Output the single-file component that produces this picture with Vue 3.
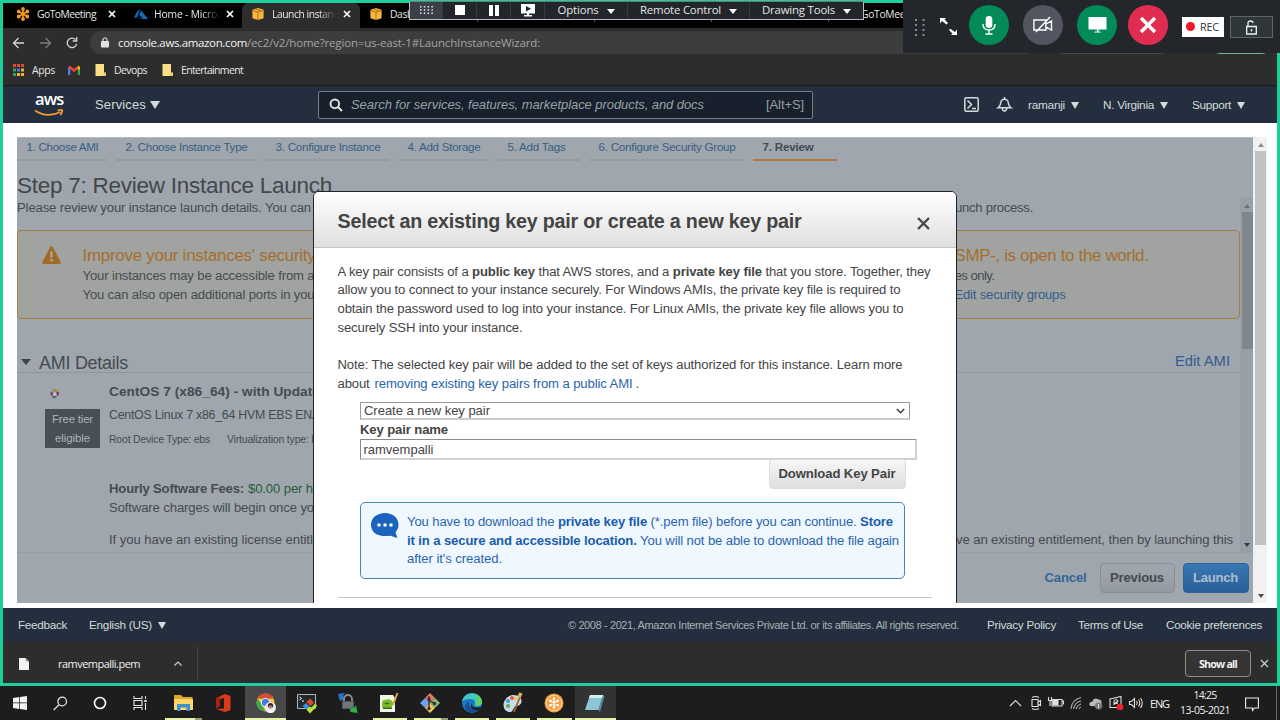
<script setup>
// Tracks a label so that it fills the given width in pixels.
const vFit = {
  mounted(el, { value }) {
    const range = document.createRange()
    range.selectNodeContents(el)
    const natural = range.getBoundingClientRect().width
    const count = el.textContent.length
    el.style.letterSpacing = `${(value - natural) / count}px`
    el.style.width = `${value}px`
  },
}

const steps = [
  { label: '1. Choose AMI', w: 72, tab: 90 },
  { label: '2. Choose Instance Type', w: 122, tab: 141 },
  { label: '3. Configure Instance', w: 105, tab: 123 },
  { label: '4. Add Storage', w: 73, tab: 91 },
  { label: '5. Add Tags', w: 58, tab: 82 },
  { label: '6. Configure Security Group', w: 137, tab: 155 },
  { label: '7. Review', w: 51, tab: 84, active: true },
]
</script>

<template>
  <div class="screen">
    <div class="frame">
      <div class="tabs">
        <div class="tab t1">
          <svg class="fav" width="14" height="14" viewBox="-7 -7 14 14"><g stroke="#f39a22" stroke-width="1.6" fill="#f39a22"><path d="M0-5V5M-4.3-2.5L4.3 2.5M-4.3 2.5L4.3-2.5" /><circle cy="-5" r="1.1" /><circle cy="5" r="1.1" /><circle cx="-4.3" cy="-2.5" r="1.1" /><circle cx="4.3" cy="2.5" r="1.1" /><circle cx="-4.3" cy="2.5" r="1.1" /><circle cx="4.3" cy="-2.5" r="1.1" /></g></svg>
          <span v-fit="59" class="tab-name">GoToMeeting</span>
          <svg class="x" width="8" height="8" viewBox="0 0 8 8"><path d="M1 1L7 7M7 1L1 7" /></svg>
        </div>
        <div class="tab t2">
          <svg class="fav" width="14" height="14" viewBox="0 0 14 14"><path fill="#0f6fbd" d="M6.3 1.8L3 4.7 0 10.8h2.8zM7 3.2l-1.7 4.6 3.3 3.4-5.2.9H14z" /></svg>
          <span v-fit="68" class="tab-name fade">Home - Micros</span>
          <svg class="x" width="8" height="8" viewBox="0 0 8 8"><path d="M1 1L7 7M7 1L1 7" /></svg>
        </div>
        <div class="tab t3">
          <svg class="fav" width="14" height="14" viewBox="0 0 14 14"><path fill="#f7b73c" d="M7 1l5.6 1.8v8.4L7 13 1.400 11.200V2.800z" /><path fill="none" stroke="#9a5e12" stroke-width=".8" d="M1.500 3.500L7 5l5.500-1.500M7 5v8M4.500 2L10 3.800" /></svg>
          <span v-fit="66" class="tab-name fade">Launch instanc</span>
          <svg class="x" width="8" height="8" viewBox="0 0 8 8"><path d="M1 1L7 7M7 1L1 7" /></svg>
        </div>
        <div class="tab t4">
          <svg class="fav" width="14" height="14" viewBox="0 0 14 14"><path fill="#f7b73c" d="M7 1l5.600 1.800v8.400L7 13 1.400 11.200V2.800z" /><path fill="none" stroke="#9a5e12" stroke-width=".8" d="M1.500 3.500L7 5l5.500-1.500M7 5v8M4.500 2L10 3.800" /></svg>
          <span v-fit="23" class="tab-name">Dash</span>
        </div>
        <i class="tick k1"></i><i class="tick"></i><i class="tick"></i><i class="tick"></i>
        <span v-fit="50" class="tab-name last">GoToMeeti</span>
      </div>

      <div class="toolbar">
        <svg width="84" height="20" viewBox="0 0 84 20" fill="none" stroke="#d6d6d6" stroke-width="1.300"><path d="M21 11H11M15.500 6L10.500 11l5 5" /><path stroke="#7d7d7d" d="M37 11h10M42.500 6l5 5-5 5" /><path d="M72.500 7.500A4.800 4.800 0 1 0 73.700 12M73.700 5v4h-4" /></svg>
        <div class="omni">
          <svg width="8" height="11" viewBox="0 0 8 11"><rect y="4" width="8" height="6.500" rx=".8" fill="#e2e2e2" /><path d="M2 4.500V3a2 2 0 0 1 4 0v1.500" fill="none" stroke="#e2e2e2" stroke-width="1.100" /></svg>
          <span v-fit="129" class="host">console.aws.amazon.com</span><span v-fit="293" class="path">/ec2/v2/home?region=us-east-1#LaunchInstanceWizard:</span>
        </div>
        <i class="chip"></i>
        <i class="update"></i>
      </div>

      <div class="bookmarks">
        <svg class="apps" width="11" height="12" viewBox="0 0 11 12"><g fill="#e0463b"><path d="M0 0h3v3H0zM4 0h3v3H4zM8 0h3v3H8z" /></g><path fill="#37a156" d="M0 4.500h3v3H0zM0 9h3v3H0z" /><path fill="#3d7be0" d="M4 4.500h3v3H4z" /><path fill="#f0b42c" d="M8 4.500h3v3H8zM8 9h3v3H8zM4 9h3v3H4z" /></svg>
        <span v-fit="23">Apps</span>
        <svg class="gmail" width="12" height="10" viewBox="0 0 12 10" fill="none" stroke-width="2.200"><path stroke="#4285f4" d="M1.100 10V2" /><path stroke="#34a853" d="M10.900 10V4" /><path stroke="#ea4335" d="M1 1.500l5 4 5-4" stroke-width="2.600" /><path stroke="#fbbc04" d="M10.900 4.500V1.500" /></svg>
        <svg class="folder f1" width="11" height="12" viewBox="0 0 11 12"><path fill="#fbdf86" d="M.500 0H9v8.500h2V12H.500z" /><path fill="#e8bf56" d="M9 8.500L11 12H8z" /></svg>
        <span v-fit="33">Devops</span>
        <svg class="folder f2" width="11" height="12" viewBox="0 0 11 12"><path fill="#fbdf86" d="M.500 0H9v8.500h2V12H.500z" /><path fill="#e8bf56" d="M9 8.500L11 12H8z" /></svg>
        <span v-fit="62">Entertainment</span>
      </div>

      <div class="nav">
        <div class="logo">
          <b>aws</b>
          <svg width="30" height="8" viewBox="0 0 32 8" preserveAspectRatio="none" fill="none" stroke="#f29a2e" stroke-width="1.800"><path d="M1 1.500Q14 9.500 28 3M25 1.500Q31 0 30 2.200 29.500 4.500 28 6" /></svg>
        </div>
        <span v-fit="51" class="services">Services</span><i class="tri s"></i>
        <div class="search">
          <svg width="14" height="14" viewBox="0 0 14 14" fill="none" stroke="#dfe3e3" stroke-width="1.900"><circle cx="5.800" cy="5.800" r="4.300" /><path d="M9 9l4 4" /></svg>
          <em v-fit="353">Search for services, features, marketplace products, and docs</em>
          <span v-fit="38" class="alt">[Alt+S]</span>
        </div>
        <svg class="shell" width="15" height="15" viewBox="0 0 15 15" fill="none" stroke="#d5dbdb" stroke-width="1.500"><rect x=".8" y=".8" width="13.400" height="13.400" rx="1.500" /><path d="M3.500 3.500L7.500 7.500l-4 4M8 11.500h4" /></svg>
        <svg class="bell" width="15" height="15" viewBox="0 0 15 15" fill="none" stroke="#d5dbdb" stroke-width="1.500"><path d="M7.500 0v2M1 10.800h13Q11.500 9 11.300 6A3.800 3.800 0 0 0 3.700 6Q3.500 9 1 10.800zM5.200 11Q5.500 14 7.500 14T9.800 11" /></svg>
        <span v-fit="37" class="n1">ramanji</span><i class="tri u"></i>
        <span v-fit="51" class="n2">N. Virginia</span><i class="tri u"></i>
        <span v-fit="39" class="n2">Support</span><i class="tri u"></i>
      </div>

      <div class="page">
        <div class="console">
          <div class="steps">
            <div v-for="s in steps" :key="s.label" class="step" :class="{ current: s.active }" :style="{ width: s.tab + 'px' }">
              <span v-fit="s.w">{{ s.label }}</span>
            </div>
          </div>
          <div class="title"><span v-fit="315">Step 7: Review Instance Launch</span></div>

          <div class="review">
            <div class="details">
              <div class="row sub"><span v-fit="294">Please review your instance launch details. You can</span><span v-fit="78" class="r-sub">unch process.</span></div>
              <div class="warn">
                <svg width="19" height="18" viewBox="0 0 19 18"><path fill="#9f6a26" d="M8.300 1Q9.500-.7 10.700 1L18.700 16Q19 17.800 17.500 18H1.500Q0 17.800.300 16z" /><path stroke="#a9a99f" stroke-width="2.400" d="M9.500 5.500v6M9.500 13v2.400" /></svg>
                <div class="warn-text">
                  <div class="row wt"><span v-fit="233">Improve your instances' security</span><span v-fit="194" class="r-w1">SMP-, is open to the world.</span></div>
                  <div class="row"><span v-fit="232">Your instances may be accessible from a</span><span v-fit="40" class="r-w2">es only.</span></div>
                  <div class="row"><span v-fit="232">You can also open additional ports in you</span><span v-fit="111" class="r-w3 link">Edit security groups</span></div>
                </div>
              </div>
              <div class="ami-head"><i></i><span v-fit="89">AMI Details</span><span v-fit="55" class="edit link">Edit AMI</span></div>
              <div class="ami">
                <div class="ami-side">
                  <svg width="10" height="10" viewBox="0 0 10 10"><path fill="#a98a3c" d="M2 0h4l3 3H5z" /><path fill="#70406d" d="M5.500 3H9v3L7 7z" /><path fill="#53608c" d="M3 7h4L5 9.500 2 9z" /><path fill="#765077" d="M0 4l3-2v5H1z" /><path fill="#c1c3b8" d="M3.500 3.500h3v3h-3z" /></svg>
                  <div class="free"><span v-fit="41">Free tier</span><span v-fit="35">eligible</span></div>
                </div>
                <div class="ami-info">
                  <div class="row a1"><b v-fit="211">CentOS 7 (x86_64) - with Update</b></div>
                  <div class="row a2"><span v-fit="211">CentOS Linux 7 x86_64 HVM EBS ENA</span></div>
                  <div class="row a3"><span v-fit="101">Root Device Type: ebs</span><span v-fit="90" class="virt">Virtualization type: h</span></div>
                  <div class="row a4"><b v-fit="135">Hourly Software Fees:</b><span v-fit="65" class="fee">$0.00 per h</span></div>
                  <div class="row"><span v-fit="205">Software charges will begin once yo</span></div>
                  <div class="row a6"><span v-fit="211">If you have an existing license entitle</span><span v-fit="277" class="r-a6">ve an existing entitlement, then by launching this</span></div>
                </div>
              </div>
            </div>
            <div class="bar inner"><i class="up"></i><i class="thumb"></i><i class="down"></i></div>
          </div>

          <div class="actions">
            <b v-fit="42" class="cancel">Cancel</b>
            <div class="btn prev"><b v-fit="54">Previous</b></div>
            <div class="btn launch"><b v-fit="45">Launch</b></div>
          </div>

          <div class="modal">
            <div class="modal-head">
              <b v-fit="464">Select an existing key pair or create a new key pair</b>
              <svg width="13" height="13" viewBox="0 0 13 13"><path d="M1 1L12 12M12 1L1 12" stroke="#484848" stroke-width="2.400" /></svg>
            </div>
            <div class="modal-body">
              <p><span v-fit="593">A key pair consists of a <b>public key</b> that AWS stores, and a <b>private key file</b> that you store. Together, they</span></p>
              <p><span v-fit="563">allow you to connect to your instance securely. For Windows AMIs, the private key file is required to</span></p>
              <p><span v-fit="566">obtain the password used to log into your instance. For Linux AMIs, the private key file allows you to</span></p>
              <p><span v-fit="185">securely SSH into your instance.</span></p>
              <p></p>
              <p><span v-fit="565">Note: The selected key pair will be added to the set of keys authorized for this instance. Learn more</span></p>
              <p><span v-fit="32">about</span><span v-fit="258" class="rm">removing existing key pairs from a public AMI</span><span class="dot">.</span></p>
              <div class="select"><span v-fit="126">Create a new key pair</span><svg width="9" height="6" viewBox="0 0 9 6"><path d="M.800 1L4.500 4.700 8.200 1" fill="none" stroke="#444" stroke-width="1.600" /></svg></div>
              <div class="label"><b v-fit="88">Key pair name</b></div>
              <div class="input"><span v-fit="70">ramvempalli</span></div>
              <div class="download"><b v-fit="117">Download Key Pair</b></div>
              <div class="info">
                <svg width="28" height="26" viewBox="0 0 28 26"><path fill="#1b63bd" d="M14 0C22 0 27.500 5 27.500 11.500c0 3.500-1 5.500-3 7.500l1.800 6-7-2.300C8 24.500 0 20.500 0 11.500 0 5 6 0 14 0z" /><g fill="#fff"><circle cx="8" cy="12" r="1.800" /><circle cx="14" cy="12" r="1.800" /><circle cx="20" cy="12" r="1.800" /></g></svg>
                <div>
                  <p><span v-fit="486">You have to download the <b>private key file</b> (*.pem file) before you can continue. <b>Store</b></span></p>
                  <p><span v-fit="492"><b>it in a secure and accessible location.</b> You will not be able to download the file again</span></p>
                  <p><span v-fit="95">after it's created.</span></p>
                </div>
              </div>
              <hr />
            </div>
          </div>
        </div>
        <div class="bar outer"><i class="up"></i><i class="thumb"></i><i class="down"></i></div>
      </div>

      <div class="footer">
        <span v-fit="49">Feedback</span>
        <span v-fit="63" class="lang">English (US)</span><i class="tri u"></i>
        <span v-fit="391" class="copy">© 2008 - 2021, Amazon Internet Services Private Ltd. or its affiliates. All rights reserved.</span>
        <span v-fit="69" class="l1">Privacy Policy</span>
        <span v-fit="65" class="l2">Terms of Use</span>
        <span v-fit="96" class="l3">Cookie preferences</span>
      </div>

      <div class="downloads">
        <svg class="file" width="10" height="12" viewBox="0 0 10 12"><path fill="#f3f3f3" d="M0 0h6.500L10 3.500V12H0z" /><path fill="#aaa" d="M6.500 0v3.500H10z" /></svg>
        <span v-fit="82">ramvempalli.pem</span>
        <svg class="chev" width="8" height="5" viewBox="0 0 8 5"><path d="M.500 4.500L4 1l3.500 3.500" fill="none" stroke="#d0d0d0" stroke-width="1.200" /></svg>
        <i class="sep"></i>
        <div class="show"><b v-fit="38">Show all</b></div>
        <svg class="close" width="9" height="9" viewBox="0 0 9 9"><path d="M1 1L8 8M8 1L1 8" stroke="#cfcfcf" stroke-width="1.200" /></svg>
      </div>
    </div>

    <div class="taskbar">
      <div class="app a40"><svg width="14" height="14" viewBox="0 0 14 14" fill="#f2f2f2"><path d="M0 2l6.300-1v5.600H0zM7 .900L14 0v6.600H7zM0 7.300h6.300V13L0 12zM7 7.300h7V14L7 13z" /></svg></div>
      <div class="app a40"><svg width="15" height="15" viewBox="0 0 15 15" fill="none" stroke="#e8e8e8" stroke-width="1.200"><circle cx="9.200" cy="5.500" r="4.300" /><path d="M6 8.800L.700 14" /></svg></div>
      <div class="app a40"><svg width="14" height="14" viewBox="0 0 14 14"><circle cx="7" cy="7" r="5.500" fill="none" stroke="#f5f5f5" stroke-width="1.700" /></svg></div>
      <div class="app a40"><svg width="14" height="14" viewBox="0 0 14 14" fill="none" stroke="#e5e5e5" stroke-width="1.100"><path d="M1 0v2.500h8V0M1 14v-2.500h8V14M1 4.500h8v5H1zM12.500 0v3M12.500 7v7" /><path stroke-width="2.400" d="M12.500 4v2" /></svg></div>
      <div class="app a44 run more"><svg width="19" height="16" viewBox="0 0 19 16"><path fill="#e2a52d" d="M0 0h7l2 2h9.500v13H0z" /><path fill="#ffd566" d="M0 4h19v11H0z" /><path fill="#3a91d0" d="M3 9h13v7h-3.500v-3.500h-6V16H3z" /></svg></div>
      <div class="app a40 gap"><svg width="16" height="18" viewBox="0 0 16 18"><path fill="#dc3b1a" d="M10 0l5.500 2v14L10 18 1 15l8-.500V4L4.500 5.500v7L1 14V4z" /><path fill="#a92118" d="M1 4l4-1.500v9.700L1 14z" /></svg></div>
      <div class="app a41 run on"><svg width="20" height="20" viewBox="0 0 20 20"><circle cx="9.500" cy="9.500" r="9" fill="#f5c931" /><path fill="#dc4938" d="M1.500 5.500A9 9 0 0 1 17.500 5.500L9 6z" /><path fill="#39a853" d="M1.500 5.500L6 12l3.500 6.500A9 9 0 0 1 1.500 5.500z" /><circle cx="9.500" cy="9.500" r="4.600" fill="#fff" /><circle cx="9.500" cy="9.500" r="3.700" fill="#3f7ee8" /><circle cx="14.500" cy="14.500" r="5.500" fill="#eee6ed" /><circle cx="14.500" cy="12.500" r="2.600" fill="#382523" /><circle cx="14.500" cy="14" r="1.800" fill="#bd8066" /><path fill="#f4f4ff" d="M11 19q3.500-5 7 0l-3.500 1z" /></svg></div>
      <div class="app a41"><svg width="20" height="19" viewBox="0 0 20 19"><path fill="#24292d" stroke="#aeb6b8" d="M.500.500h18v14H.500z" /><path fill="none" stroke="#fff" d="M2.500 3l2 1.500-2 1.500M5 7h2" /><path fill="#e5472e" d="M13 4.500l4 4-3.500 3.500-4-4z" /><path fill="#3a8ee6" d="M9 9l4 4-3 3-4.500-4z" /><path fill="#b9e235" d="M13 19.500l-3.500-4 3.500-3 1.500 1 4-4.500 1.500 3z" /></svg></div>
      <div class="app a41"><svg width="20" height="20" viewBox="0 0 20 20"><path fill="#2872d1" d="M0 1l7-1-2 3 2 3-5 2z" /><path d="M6 9V6a4 4 0 0 1 8 0v3" fill="none" stroke="#8a8e90" stroke-width="1.800" /><rect x="4" y="8" width="12" height="8" fill="#53585a" /><path stroke="#8d9193" d="M5 10h10M5 12h10M5 14h10" /><path fill="#2ab840" d="M12 16l4-1 2-3 1.500 8-7-1z" /></svg></div>
      <div class="app a41 run"><svg width="19" height="20" viewBox="0 0 19 20"><path fill="#f0f5e8" d="M0 2h13l2 3v14H0z" /><path fill="#7cba2d" d="M2 10q1-4 4-3 2-2 4 0 3 0 3 4-1 5-5 5-5 0-6-2z" /><path fill="#37701b" d="M4 10.500q3-2 6 0l-3 1zM3 14.500h9V16H3z" /><path stroke="#d7a847" stroke-width="2" d="M17.500 0L13 12" /></svg></div>
      <div class="app a41 run more"><svg width="20" height="20" viewBox="0 0 20 20"><path fill="#e67769" d="M10 0l5 5-5 5-5-5z" /><path fill="#6ea1ea" d="M5 5l5 5-5 5-5-5z" /><path fill="#82be6b" d="M15 5l5 5-5 5-5-5z" /><path fill="#f2c663" d="M10 10l5 5-5 5-5-5z" /><path d="M9 3v14M9 7l6 4" stroke="#372b27" stroke-width="1.300" fill="none" /><circle cx="9" cy="6" r="1.700" fill="#372b27" /><circle cx="14.500" cy="10.500" r="1.700" fill="#372b27" /><circle cx="9" cy="15.500" r="1.700" fill="#372b27" /></svg></div>
      <div class="app a41 run"><svg width="20" height="20" viewBox="0 0 20 20"><circle cx="10" cy="10" r="10" fill="#1679c9" /><path fill="#44c7be" d="M0 9C1 1 9-1.500 15 1.500 19 4 21 8 19.500 11c-2 3-6 2.500-7 1 2-3-.500-6-4-6S1 7 0 9z" /><path fill="#64cf62" d="M14 1c5 2 7 7 5.500 10-2 2-5 2-7 1 3-3 4-7 1.500-11z" /><path fill="#174f91" d="M7 9c-1 5 3 8 10 7-4 6-13 4-14-2 0-3 2-5 4-5z" /><path fill="#1d1d1d" d="M10 10c-1 4 3 5.500 9 4l-1.500 3C11 18 7 14 10 10z" /></svg></div>
      <div class="app a41 run"><svg width="20" height="20" viewBox="0 0 20 20"><path fill="#c7dceb" d="M1 9C4 2 11 0 17 4c4 6-1 9-4 9-2 0-2 4-5 6-4 1-9-3-7-10z" /><circle cx="5" cy="8" r="2" fill="#4d98ce" /><circle cx="9" cy="5" r="2" fill="#e45a3a" /><circle cx="5" cy="13" r="2" fill="#65a943" /><circle cx="13" cy="6" r="1.700" fill="#f2c840" /><path stroke="#a2642e" stroke-width="1.800" d="M17 4L11 19" /><path stroke="#e3ac62" stroke-width="3.500" d="M18 0l-2 4" /></svg></div>
      <div class="app a41 run"><svg width="20" height="20" viewBox="-10 -10 20 20"><circle r="9.500" fill="#f49d3f" /><circle r="7.600" fill="none" stroke="#fff6df" stroke-width=".6" /><g stroke="#fff" stroke-width="1.300" stroke-linecap="round" fill="#fff"><path d="M0-4.500V4.500M-3.900-2.300l7.800 4.600M-3.900 2.300l7.800-4.600" /><circle cy="-4.300" r=".7" /><circle cy="4.300" r=".7" /><circle cx="-3.800" cy="-2.200" r=".7" /><circle cx="3.800" cy="2.200" r=".7" /><circle cx="-3.800" cy="2.200" r=".7" /><circle cx="3.800" cy="-2.200" r=".7" /></g></svg></div>
      <div class="app a41 run dim"><svg width="20" height="18" viewBox="0 0 20 18"><path fill="#8ec6d5" d="M5 1h13l-4.500 15H0z" /><path fill="#4e8fa4" d="M18 1l1.500 1L15 18l-1.500-2z" /><path fill="#d3edf2" d="M5 1h13l-1 3H4z" /></svg></div>

      <div class="tray">
        <svg width="134" height="16" viewBox="0 0 134 16" fill="none" stroke="#dedede" stroke-width="1.100">
          <path d="M1 11l5.500-5.500L12 11" />
          <path d="M23 4.500h6v7h-6zM29 7l2.500-1.500v5L29 9M23 2.500q3.500-2 7 0M23 13.500q3.500 2 7 0" />
          <path d="M43 4.500h10v6.500H43zM53 6h1.500v3.500M39.500 2v3.500h3V2M41 5.500V11" /><path fill="#dedede" d="M44 5.500h5V10h-5z" />
          <path stroke="#aaa" d="M62 14Q63 4.500 72 2.500M64.500 14Q65.500 7.500 72 6M67 14Q68 10.500 72 9M70 14q.500-1.500 2-2" />
          <path fill="#bcbcbc" stroke="none" d="M81 11q-2-4 2.500-4.500 1-4.500 6-2 3.500 0 3 4l1 3z" /><circle cx="89.500" cy="11" r="3.500" fill="#777" stroke="none" /><path d="M89.500 9v4" />
          <path d="M101 4l11-2.500v11H101zM105 10V6q2-3 4 0l-4 3 4-1" /><circle cx="111" cy="12" r="3.300" fill="#ee222d" stroke="none" />
          <path d="M120.500 6.500h2l3-3v9l-3-3h-2zM127.500 6q1.500 2 0 4M129.500 4.500q2.500 3.500 0 7M131.500 3q3.500 5 0 10" />
        </svg>
        <span v-fit="19" class="eng">ENG</span>
        <div class="clock"><span v-fit="23">14:25</span><span v-fit="50">13-05-2021</span></div>
        <svg class="note" width="14" height="14" viewBox="0 0 14 14" fill="none" stroke="#ededed" stroke-width="1.100"><path d="M.600 1h12.800v10H9.500L7.500 13.500V11H.600z" /></svg>
        <i class="peek"></i>
      </div>
    </div>

    <div class="share-bar">
      <div class="cell grip"><svg width="13" height="8" viewBox="0 0 13 8" fill="#e8e8e8"><path d="M0 0h1.500v1.500H0zM3.800 0h1.500v1.500H3.800zM7.600 0h1.500v1.500H7.600zM11.400 0h1.500v1.500h-1.500zM0 3.200h1.500v1.500H0zM3.800 3.200h1.500v1.500H3.800zM7.600 3.200h1.500v1.500H7.600zM11.400 3.200h1.500v1.500h-1.500zM0 6.400h1.500v1.500H0zM3.800 6.400h1.500v1.500H3.800zM7.600 6.400h1.500v1.500H7.600zM11.400 6.400h1.500v1.500h-1.500z" /></svg></div>
      <div class="cell c34"><svg width="10" height="10"><rect width="10" height="10" fill="#fff" /></svg></div>
      <div class="cell c34"><svg width="10" height="11" fill="#fff"><rect width="4" height="11" /><rect x="6" width="4" height="11" /></svg></div>
      <div class="cell c34"><svg width="14" height="13" viewBox="0 0 14 13"><path fill="#fff" d="M0 0h14v9.500H0zM6 9h2v2h3v1.500H3V11h3z" /><path fill="#202124" d="M5 2l5 2.800L5 7.500z" /></svg></div>
      <div class="cell opt"><span v-fit="41">Options</span><i></i></div>
      <div class="cell remote"><span v-fit="81">Remote Control</span><i></i></div>
      <div class="cell draw"><span v-fit="73">Drawing Tools</span><i></i></div>
    </div>

    <div class="call">
      <svg class="dots" width="10" height="17" viewBox="0 0 10 17" fill="#858b93"><path d="M0 0h2v2H0zM7.500 0h2v2h-2zM0 5h2v2H0zM7.500 5h2v2h-2zM0 10h2v2H0zM7.500 10h2v2h-2zM0 15h2v2H0zM7.500 15h2v2h-2z" /></svg>
      <svg class="expand" width="17" height="17" viewBox="0 0 17 17"><path fill="#fff" d="M0 0h6L4.500 1.500 8 5 6.500 6.500 2 3 0 5.500zM17 17h-6l1.500-1.500L9 12l1.200-1.200L15 14l2-2.500z" /></svg>
      <div class="round green"><svg width="14" height="19" viewBox="0 0 14 19"><rect x="3.700" width="6.600" height="12" rx="3.300" fill="#fff" /><path d="M1 8q0 6 6 6t6-6M7 14v3.500M3.500 18h7" fill="none" stroke="#fff" stroke-width="1.400" /></svg></div>
      <div class="round grey"><svg width="20" height="16" viewBox="0 0 20 16" fill="none" stroke="#fff" stroke-width="1.400"><path d="M.900 3h12v10H.900zM13 7l5.500-3v9L13 10M3 15L17 0" /></svg></div>
      <div class="round green"><svg width="19" height="16" viewBox="0 0 19 16"><path fill="#fff" d="M.500 0h18v12.500h-18zM6 15.500l1-1h5l1 1zM9 12h1.500v3H9z" /></svg></div>
      <div class="round red"><svg width="18" height="18" viewBox="0 0 18 18"><path d="M2 2l14 14M16 2L2 16" stroke="#fff" stroke-width="3.400" /></svg></div>
      <div class="rec"><i></i><span v-fit="19">REC</span></div>
      <div class="lock"><svg width="11" height="15" viewBox="0 0 11 15" fill="none" stroke="#eef2f2" stroke-width="1.300"><path d="M.700 6.500h9.600v7.500H.700zM2 6.500V3q0-2 2.500-2T7 3M5.500 9v2.500" /></svg></div>
    </div>
  </div>
</template>

<style>
body { margin: 0; overflow: hidden; background: #1d1d1d; }
</style>

<style scoped>
.screen { position: relative; width: 1280px; height: 720px; overflow: hidden; font-family: "Liberation Sans", Arial, sans-serif; color: #d5dbdb; }
.screen * { box-sizing: border-box; }
.screen span, .screen b, .screen em { white-space: nowrap; }
.screen span, .screen svg, .screen i, em { flex: none; }
svg { display: block; overflow: visible; }
i { display: block; }
.frame { height: 686px; border: 3px solid #1dcf9b; background: #2d2d2d; display: flex; flex-direction: column; }
.frame > div { flex: none; }

.tabs, .toolbar, .bookmarks, .downloads, .taskbar, .share-bar, .call { font-family: "Open Sans", "Noto Sans", sans-serif; font-size: 10.700px; }
.tabs { height: 25px; background: #000; display: flex; align-items: center; overflow: hidden; color: #e9e9e9; font-size: 10.300px; }
.tab { height: 25px; display: flex; align-items: center; padding-bottom: 3px; flex: none; }
.t1 { width: 119px; padding-left: 13px; }
.t1 .tab-name { margin-left: 7px; }
.t1 .x { margin-left: 12px; }
.t1::after { content: ""; width: 1px; height: 16px; background: #555; margin-left: 9px; }
.t2 { width: 120px; padding-left: 12px; background: #000; border-bottom-right-radius: 6px; }
.t2 .tab-name { margin-left: 6px; }
.t2 .x { margin-left: 4px; }
.t3 { width: 118px; background: #2d2d2d; padding-left: 9px; border-radius: 6px 6px 0 0; }
.t3 .tab-name { margin-left: 7px; }
.t3 .x { margin-left: 5px; }
.t4 { width: 100px; padding-left: 9px; }
.t4 .tab-name { margin-left: 7px; }
.x { stroke: #fff; stroke-width: 1.700px; }
.fade { -webkit-mask-image: linear-gradient(90deg, #000 70%, transparent 97%); mask-image: linear-gradient(90deg, #000 70%, transparent 97%); }
.tick { width: 1px; height: 5px; align-self: flex-start; margin-top: 14px; background: #555; margin-right: 116px; }
.tick.k1 { margin-left: 17px; }
.last { margin-left: -84px; padding-bottom: 3px; }

.toolbar { height: 29px; display: flex; align-items: flex-start; position: relative; }
.toolbar > svg { margin: 4px 3px 0 0; }
.omni { width: 945px; height: 23px; margin-top: 3px; border-radius: 12px; background: #3d3d3d; display: flex; align-items: center; padding: 0 0 1px 11px; font-size: 11.500px; }
.host { color: #f2f2f2; margin-left: 9px; }
.path { color: #a3a3a3; }
.chip { width: 118px; height: 23px; margin: 3px 0 0 18px; border-radius: 12px; border: 1px solid #4a4a4a; }
.update { width: 58px; height: 23px; margin: 3px 0 0 41px; border-radius: 8px; border: 1px solid #77b58d; }

.bookmarks { height: 29px; border-bottom: 1px solid #1a1a1a; display: flex; align-items: center; padding: 0 0 2px 10px; color: #e6e6e6; font-size: 10.500px; }
.apps { margin-right: 8px; }
.gmail { margin-left: 13px; }
.f1 { margin: 0 8px 0 15px; }
.f2 { margin: 0 8px 0 15px; }

.nav { height: 37px; background: #232f3e; display: flex; align-items: center; font-size: 11.800px; position: relative; }
.logo { width: 32px; margin-left: 30px; height: 24px; display: flex; flex-direction: column; }
.logo b { font: 600 16.500px/14px "Open Sans", sans-serif; color: #fff; letter-spacing: -.9px; padding-left: 2px; margin-top: -1px; }
.logo svg { margin-top: 3px; margin-left: 1px; }
.services { margin-left: 30px; font-size: 13px; }
.tri { border: solid transparent; border-width: 0; border-top-color: #d5dbdb; }
.tri.s { border-width: 8px 5px 0; margin-left: 4px; }
.tri.u { border-width: 7px 4.500px 0; margin: 1px 0 0 6px; }
.search { width: 495px; height: 28px; margin-left: 158px; background: #17202c; border: 1px solid #75807f; border-radius: 2px; display: flex; align-items: center; padding-left: 10px; color: #95a3a4; font-size: 13px; }
.search em { margin-left: 8px; }
.alt { margin-left: 62px; color: #95a0a4; }
.shell { margin-left: 151px; }
.bell { margin-left: 18px; }
.n1 { margin-left: 16px; }
.n2 { margin-left: 24px; }

.page { height: 485px; background: #fff; padding: 14px 0 0 14px; display: flex; }
.console { position: relative; width: 1236px; height: 466px; background: #9fa6ad; color: #464b51; font-size: 13.125px; overflow: hidden; border-top: 1px solid #b5babf; }
.steps { height: 23px; display: flex; gap: 9px; font-size: 11.600px; color: #386084; }
.step { height: 23px; padding-left: 9.500px; flex: none; line-height: 18px; border-bottom: 2px solid #949ba2; display: flex; }
.step.current { color: #444b51; font-weight: 700; border-bottom-color: #b1793a; }
.title { height: 37px; padding-top: 12px; line-height: 26px; font-size: 22.500px; color: #42474c; }
.review { height: 355px; display: flex; }
.details { width: 1223px; height: 355px; border-bottom: 1px solid #979ea5; }
.row { display: flex; height: 19px; line-height: 19px; }
.sub { height: 18px; line-height: 20px; }
.r-sub { margin-left: 644px; }
.warn { margin-top: 14px; height: 89px; border: 1px solid #aa7d43; border-radius: 4px; background: #a0a39f; display: flex; padding: 15px 0 0 24px; }
.warn-text { margin-left: 21.500px; }
.wt { height: 20px; line-height: 20px; font-size: 16.900px; color: #a56e31; }
.r-w1 { margin-left: 639px; }
.r-w2 { margin-left: 640px; }
.r-w3 { margin-left: 640px; }
.link { color: #355b91; }
.ami-head { height: 54px; padding-top: 35px; border-bottom: 1px solid #8f969d; display: flex; line-height: 19px; font-size: 18px; }
.ami-head i { border: solid transparent; border-width: 6px 5px 0; border-top-color: #3e4449; margin: 5px 0 0 4px; height: 0; }
.ami-head span { margin-left: 8px; }
.ami-head .edit { margin-left: 1047px; font-size: 14.800px; line-height: 15px; }
.ami { display: flex; }
.ami-side { width: 92px; padding: 16px 0 0 28px; }
.ami-side > svg { margin-left: 5px; }
.free { width: 55px; height: 39px; margin-top: 10px; background: #484f56; color: #adb3b8; font-size: 11.500px; display: flex; flex-direction: column; align-items: center; line-height: 19px; padding-top: 1px; }
.ami-info { padding-top: 9px; }
.a1 { font-size: 13.700px; }
.a2 { margin-top: 4px; line-height: 20px; font-size: 12.400px; }
.a3 { margin-top: 5px; height: 18px; line-height: 20px; font-size: 10.500px; }
.virt { margin-left: 17px; }
.a4 { margin-top: 32px; }
.fee { color: #245e3c; margin-left: 4px; }
.a6 { margin-top: 13px; }
.r-a6 { margin-left: 636px; }
.bar { display: flex; flex-direction: column; align-items: center; }
.bar .up { border: solid transparent; border-width: 0 3px 4px; }
.bar .down { border: solid transparent; border-width: 4px 3px 0; margin-top: auto; }
.inner { width: 13px; height: 355px; background: #989fa6; padding: 6px 0 6px 1px; }
.bar.inner .up { border-bottom-color: #6a7177; }
.bar.inner .down { border-top-color: #343a40; }
.inner .thumb { width: 11px; height: 137px; margin-top: 4px; background: #7f868c; }
.outer { width: 14px; height: 466px; background: #f1f1f1; padding: 6px 0 5px 1px; }
.bar.outer .up { border-bottom-color: #8b8b8b; }
.bar.outer .down { border-top-color: #4a4a4a; }
.outer .thumb { width: 11px; height: 394px; margin-top: 4px; background: #c1c1c1; }
.actions { height: 50px; display: flex; align-items: center; justify-content: flex-end; padding: 0 4.500px 1px 0; font-size: 13.125px; }
.cancel { color: #366498; margin-right: 13px; }
.btn { height: 30px; display: flex; align-items: center; justify-content: center; border-radius: 4px; border: 1px solid #878e95; }
.prev { width: 75px; background: linear-gradient(#a0a7ad, #949aa1); margin-right: 8px; color: #43494e; }
.launch { width: 66px; background: linear-gradient(#3778b4, #2a5e98); border-color: #2d6199; color: #adbdcd; }

.modal { position: absolute; left: 296px; top: 53px; width: 644px; height: 420px; border: 1px solid #202428; border-radius: 6px; background: #fff; overflow: hidden; color: #444; }
.modal-head { height: 56px; border-bottom: 1px solid #c6c6c6; background: linear-gradient(#fff, #dfdfdf); display: flex; align-items: center; padding: 4px 26px 0 23.500px; justify-content: space-between; font-size: 19.700px; }
.modal-head svg { margin-top: 3px; }
.modal-body { padding: 14.500px 24px 0 23.500px; }
.modal p { margin: 0; height: 18.700px; line-height: 18.700px; display: flex; }
.modal p b { font-weight: 700; }
.rm { color: #2a62ad; margin-left: 5px; }
.dot { margin-left: 3px; }
.select { width: 550px; height: 18px; margin: 8.600px 0 0 22.500px; border: 1px solid #999; border-bottom: 2px solid #ccc; display: flex; align-items: center; justify-content: space-between; padding: 1px 4px 0 3px; font-size: 13px; }
.label { height: 19px; line-height: 20px; margin-left: 22.500px; }
.input { width: 557px; height: 21px; margin-left: 22.500px; border: 1px solid #8b8b8b; border-right: 2px solid #d0d0d0; border-bottom: 2px solid #d0d0d0; line-height: 19px; padding-left: 2.500px; font-size: 13px; display: flex; }
.download { width: 137px; height: 30px; margin: -1px 0 0 431px; border: 1px solid #ddd; border-radius: 4px; background: linear-gradient(#f7f7f7, #dedede); display: flex; align-items: center; justify-content: center; }
.info { width: 545px; height: 77px; margin: 13px 0 0 22.500px; border: 1px solid #4188b8; border-radius: 5px; background: #f0f8ff; color: #2b64ae; display: flex; padding: 10px 0 0 10px; }
.info b { color: #1b5cab; }
.info > div { margin: 0 0 0 8px; }
.modal hr { border: 0; height: 1px; background: #c4c4c4; margin: 18px 0 0; }

.footer { height: 33px; background: #232f3e; display: flex; align-items: center; padding-left: 15px; font-size: 11.700px; }
.lang { margin-left: 22px; }
.copy { margin-left: 402px; color: #a7b0b4; font-size: 11px; }
.l1 { margin-left: 28px; }
.l2 { margin-left: 22px; }
.l3 { margin-left: 23px; }

.downloads { height: 42px; display: flex; align-items: center; padding: 3px 0 0 16px; color: #f0f0f0; position: relative; }
.file { margin-right: 29px; }
.downloads > span { font-size: 11px; }
.chev { margin-left: 34px; }
.sep { width: 1px; height: 36px; background: #424242; margin: 0 987px 0 15px; }
.show { width: 66px; height: 27px; border: 1px solid #8f8f8f; border-radius: 4px; background: #343434; display: flex; align-items: center; justify-content: center; flex: none; }
.close { margin-left: 9px; }

.taskbar { height: 34px; background: #1d1d1d; display: flex; color: #f0f0f0; }
.app { position: relative; height: 34px; display: flex; align-items: center; justify-content: center; flex: none; }
.a40 { width: 40px; }
.a44 { width: 44px; margin-left: 1px; }
.a41 { width: 41.200px; }
.gap { width: 38px; margin-left: -1px; margin-right: 3px; }
.run::after { content: ""; position: absolute; left: 4px; right: 3px; bottom: 0; height: 2px; background: #e4f3a8; }
.more::after { background: linear-gradient(90deg, #e4f3a8 80%, #969f7a 80%); }
.app.on { background: #484848; }
.app.on::after, .dim::after { left: 0; right: 0; }
.dim { background: #333; }
.tray { margin-left: auto; display: flex; align-items: center; height: 34px; }
.eng { margin-left: 7px; font-size: 11px; }
.clock { width: 50px; margin-left: 11px; display: flex; flex-direction: column; align-items: center; font-size: 10.500px; line-height: 15.500px; }
.note { margin: 2px 0 0 15px; }
.peek { width: 1px; height: 34px; background: #666; margin: 0 3px 0 17px; }

.share-bar { position: absolute; left: 409px; top: 1px; width: 455px; height: 19px; border: 1px solid #b9bcbf; border-top-color: #777; background: #22252a; display: flex; color: #e4e6e8; font-size: 11.400px; }
.cell { height: 17px; display: flex; align-items: center; justify-content: center; border-left: 1px solid #36393e; padding-bottom: 1px; }
.cell span { line-height: 13px; margin-top: -1px; }
.grip { width: 32px; background: #3a3f4a; border: 0; }
.c34 { width: 34px; }
.cell i { border: solid transparent; border-width: 5px 4px 0; border-top-color: #fff; margin: 3px 0 0 8px; }
.opt { width: 83px; }
.remote { width: 122px; }
.draw { width: 114px; }

.call { position: absolute; left: 903px; top: 0; width: 377px; height: 53px; background: #23272b; display: flex; align-items: center; padding-bottom: 3px; }
.dots { margin: 4px 0 0 12px; }
.expand { margin: 3px 12px 0 15px; }
.round { width: 40px; height: 40px; border-radius: 50%; display: flex; align-items: center; justify-content: center; flex: none; }
.green { background: #028a58; margin-right: 14px; }
.grey { background: #525660; margin-right: 14px; }
.red { background: #e12c51; margin: 0 14px 0 -3px; }
.rec { width: 42px; height: 20px; margin-top: 3px; background: #fff; color: #333; display: flex; align-items: center; padding-left: 4px; }
.rec i { width: 9px; height: 9px; border-radius: 50%; background: #f3132a; margin-right: 5px; }
.lock { width: 43px; height: 22px; margin: 4px 0 0 6px; border: 1px solid #5d6567; background: #30373b; display: flex; align-items: center; justify-content: center; }
</style>
